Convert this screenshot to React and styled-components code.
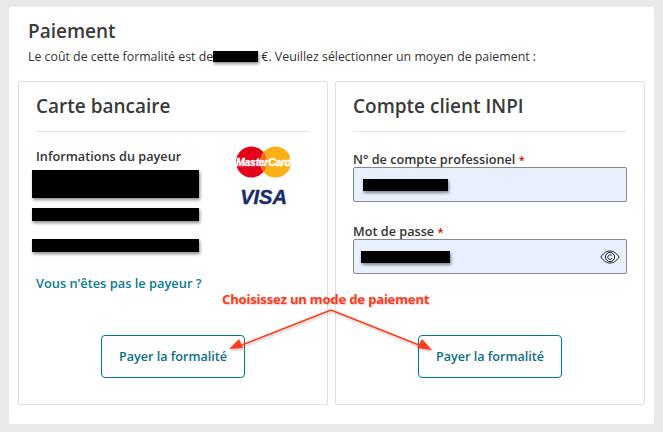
import React from "react";
import styled, { createGlobalStyle } from "styled-components";

const GlobalStyle = createGlobalStyle`
  * {
    box-sizing: border-box;
  }
  html, body {
    margin: 0;
    padding: 0;
    background: #e9e9e9;
    font-family: "Open Sans", "Noto Sans", sans-serif;
    color: #333;
  }
`;

const Page = styled.div`
  width: 663px;
  height: 432px;
  padding: 7px 9px 8px;
  overflow: hidden;
`;

const Panel = styled.div`
  position: relative;
  height: 417px;
  padding: 12px 9px 0;
  background: #fff;
  border-radius: 2px;
`;

const Title = styled.h1`
  margin: 0 0 0 10px;
  font-size: 19px;
  line-height: 24px;
  font-weight: 650;
  color: #3a3a3a;
`;

const Intro = styled.p`
  margin: 4px 0 0 10px;
  font-size: 12.35px;
  line-height: 20px;
  color: #333;
  white-space: nowrap;
`;

const Columns = styled.div`
  display: grid;
  grid-template-columns: 310px 310px;
  gap: 7px;
  margin-top: 14px;
`;

const Card = styled.section`
  height: 324px;
  padding: 11px 17px 0;
  border: 1px solid #e0e0e0;
  border-radius: 2px;
  display: flex;
  flex-direction: column;
`;

const CardTitle = styled.h2`
  margin: 0;
  padding-bottom: 11px;
  font-size: 19px;
  line-height: 27px;
  font-weight: 650;
  color: #3a3a3a;
  border-bottom: 1px solid #e4e4e4;
`;

const PayerRow = styled.div`
  display: flex;
  justify-content: space-between;
  margin-top: 14px;
  height: 127px;
`;

const PayerInfo = styled.div`
  width: 170px;
`;

const Label = styled.div`
  font-size: 12.7px;
  line-height: 20px;
  font-weight: 600;
  color: #333;
  white-space: nowrap;
`;

const Redact = styled.span`
  display: ${(p) => (p.$inline ? "inline-block" : "block")};
  width: ${(p) => p.$w}px;
  height: ${(p) => p.$h}px;
  margin-left: ${(p) => p.$left || 0}px;
  margin-top: ${(p) => p.$top || 0}px;
  vertical-align: ${(p) => (p.$inline ? "-1px" : "baseline")};
  background: #000;
  box-shadow: 1px 2px 3px rgba(0, 0, 0, 0.45);
`;

const Logos = styled.div`
  width: 56px;
  margin-right: 18px;
`;

const PayerLink = styled.a`
  display: block;
  font-size: 12.85px;
  line-height: 20px;
  font-weight: 600;
  color: #0b7a94;
`;

const ButtonRow = styled.div`
  display: flex;
  justify-content: center;
  margin-top: auto;
  margin-bottom: 26px;
`;

const PayButton = styled.button`
  width: 144px;
  height: 43px;
  background: #fff;
  border: 1px solid #007a8f;
  border-radius: 4px;
  font-family: inherit;
  font-size: 12.6px;
  font-weight: 600;
  color: #0b6f86;
`;

const Field = styled.div`
  margin-top: ${(p) => p.$top}px;
`;

const FieldLabel = styled.label`
  display: block;
  font-size: 12.7px;
  line-height: 14px;
  font-weight: 600;
  color: #333;
`;

const Star = styled.span`
  font-size: 11px;
  color: #d00000;
`;

const FieldInput = styled.div`
  display: flex;
  align-items: center;
  justify-content: space-between;
  height: 35px;
  padding: 0 6px 0 ${(p) => p.$pad}px;
  background: #e8f0fe;
  border: 1px solid #85888c;
  border-radius: 2px;
`;

const Overlay = styled.svg`
  position: absolute;
  left: 0;
  top: 0;
  pointer-events: none;
`;

const Callout = styled.div`
  position: absolute;
  left: 213px;
  top: 283px;
  font-family: "Noto Sans", sans-serif;
  font-size: 13.1px;
  line-height: 18px;
  font-weight: 700;
  letter-spacing: -0.2px;
  color: #ff3d1f;
  text-shadow: 1px 1px 2px rgba(0, 0, 0, 0.2);
  white-space: nowrap;
`;

const CardLogos = () => (
  <svg width="56" height="62" viewBox="0 0 56 62">
    <circle cx="15.5" cy="16" r="15.5" fill="#e4001b" />
    <circle cx="39.5" cy="16" r="15.5" fill="#fbb116" />
    <path d="M27.5 6.2a15.5 15.5 0 0 1 0 19.6a15.5 15.5 0 0 1 0-19.6z" fill="#f36a21" />
    <text
      x="27.5"
      y="20"
      textAnchor="middle"
      fontFamily="Liberation Sans, sans-serif"
      fontSize="10.5"
      fontWeight="700"
      fontStyle="italic"
      letterSpacing="-0.3"
      fill="#fff"
      stroke="#fff"
      strokeWidth="0.4"
    >
      MasterCard
    </text>
    <text
      x="27.5"
      y="58"
      textAnchor="middle"
      fontFamily="Liberation Sans, sans-serif"
      fontSize="20"
      fontWeight="700"
      fontStyle="italic"
      fill="#1a2a6c"
      stroke="#1a2a6c"
      strokeWidth="0.4"
    >
      VISA
    </text>
  </svg>
);

const EyeIcon = () => (
  <svg width="20" height="14" viewBox="0 0 20 14" fill="none" stroke="#222" strokeWidth="1">
    <path d="M0.8 7C4 2.4 7 1 10 1s6 1.4 9.2 6C16 11.6 13 13 10 13S4 11.6 0.8 7z" />
    <circle cx="10" cy="7" r="4.6" />
    <path d="M11.6 5.4A2.3 2.3 0 1 0 12.2 8" />
  </svg>
);

const Arrows = () => (
  <Overlay width="645" height="417" viewBox="0 0 645 417">
    <defs>
      <filter id="soft" x="-10%" y="-10%" width="120%" height="130%">
        <feDropShadow dx="1" dy="1.5" stdDeviation="1.2" floodColor="#000" floodOpacity="0.25" />
      </filter>
    </defs>
    <g filter="url(#soft)" fill="#ff3d1f" stroke="none">
      <path d="M322 303L228 340" stroke="#ff3d1f" strokeWidth="1.6" />
      <path d="M322 303L415 340" stroke="#ff3d1f" strokeWidth="1.6" />
      <path d="M220 342L230 332L234 341z" />
      <path d="M423 343L408 341L413 332z" />
    </g>
  </Overlay>
);

export default function App() {
  return (
    <Page>
      <GlobalStyle />
      <Panel>
        <Title>Paiement</Title>
        <Intro>
          Le coût de cette formalité est de
          <Redact $inline $w={45} $h={11} /> €. Veuillez sélectionner un moyen de paiement :
        </Intro>
        <Columns>
          <Card>
            <CardTitle>Carte bancaire</CardTitle>
            <PayerRow>
              <PayerInfo>
                <Label>Informations du payeur</Label>
                <Redact $w={167} $h={28} $left={-4} $top={4} />
                <Redact $w={167} $h={13} $left={-4} $top={10} />
                <Redact $w={167} $h={13} $left={-4} $top={18} />
              </PayerInfo>
              <Logos>
                <CardLogos />
              </Logos>
            </PayerRow>
            <PayerLink>Vous n’êtes pas le payeur ?</PayerLink>
            <ButtonRow>
              <PayButton>Payer la formalité</PayButton>
            </ButtonRow>
          </Card>
          <Card>
            <CardTitle>Compte client INPI</CardTitle>
            <Field $top={20}>
              <FieldLabel>
                N° de compte professionel <Star>*</Star>
              </FieldLabel>
              <FieldInput $pad={9}>
                <Redact $w={85} $h={12} />
              </FieldInput>
            </Field>
            <Field $top={22}>
              <FieldLabel>
                Mot de passe <Star>*</Star>
              </FieldLabel>
              <FieldInput $pad={7}>
                <Redact $w={89} $h={12} />
                <EyeIcon />
              </FieldInput>
            </Field>
            <ButtonRow>
              <PayButton>Payer la formalité</PayButton>
            </ButtonRow>
          </Card>
        </Columns>
        <Arrows />
        <Callout>Choisissez un mode de paiement</Callout>
      </Panel>
    </Page>
  );
}
